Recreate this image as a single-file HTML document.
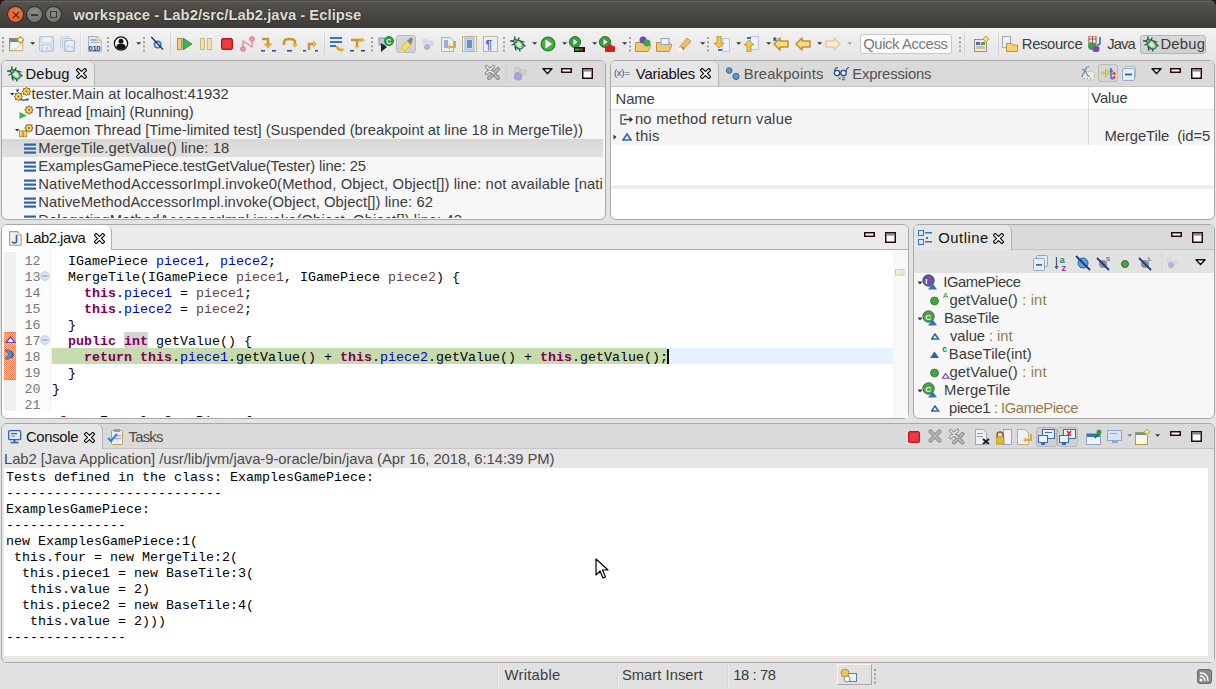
<!DOCTYPE html><html><head><meta charset="utf-8"><style>
html,body{margin:0;padding:0;}
body{width:1216px;height:689px;overflow:hidden;position:relative;background:#e3e3e3;font-family:"Liberation Sans",sans-serif;}
body div, body svg{position:absolute;}
.t{white-space:pre;line-height:18px;}
.m{white-space:pre;line-height:16px;font-family:"Liberation Mono",monospace;font-size:13.333px;}
.kw{color:#7f0055;font-weight:bold;}
.fd{color:#0000c0;}
.pm{color:#6a3e3e;}
</style></head><body><div style="left:0px;top:0px;width:1216px;height:28px;background:linear-gradient(#57554e 0px,#4e4c46 8px,#403f3b 24px,#3a3935 28px);"></div><div style="left:0px;top:0px;width:1216px;height:1px;background:#4a4944;"></div><div style="left:4px;top:1px;width:1208px;height:1px;background:#67655c;"></div><svg style="left:0;top:0" width="6" height="6"><path d="M0 0H6Q1 0 0 6Z" fill="#2c0a22"/></svg><svg style="left:1210px;top:0" width="6" height="6"><path d="M6 0H0Q5 0 6 6Z" fill="#1c1c1a"/></svg><div style="left:7.0px;top:6px;width:17px;height:17px;border-radius:50%;background:#2f2e2a;"></div><div style="left:8.0px;top:7px;width:15px;height:15px;border-radius:50%;background:radial-gradient(circle at 50% 35%,#f7793f,#e9541d);"></div><svg style="left:11.5px;top:10.5px" width="8" height="8" viewBox="0 0 8 8"><path d="M1 1L7 7M7 1L1 7" stroke="#3a2a20" stroke-width="1.2"/></svg><div style="left:26.0px;top:6px;width:17px;height:17px;border-radius:50%;background:#2f2e2a;"></div><div style="left:27.0px;top:7px;width:15px;height:15px;border-radius:50%;background:radial-gradient(circle at 50% 35%,#8c8b86,#6d6c67);"></div><div style="left:31.0px;top:14px;width:7px;height:1.5px;background:#3a3935;"></div><div style="left:45.0px;top:6px;width:17px;height:17px;border-radius:50%;background:#2f2e2a;"></div><div style="left:46.0px;top:7px;width:15px;height:15px;border-radius:50%;background:radial-gradient(circle at 50% 35%,#8c8b86,#6d6c67);"></div><div style="left:50.0px;top:11px;width:7px;height:7px;border:1.2px solid #3a3935;box-sizing:border-box;"></div><div class="t" style="left:73.3px;top:5.87px;font-size:14.8px;color:#dfdbd2;font-family:'Liberation Sans', sans-serif;letter-spacing:0.026px;font-weight:bold;text-shadow:0 0 1.5px #1a1a18;">workspace - Lab2/src/Lab2.java - Eclipse</div><div style="left:0px;top:28px;width:1216px;height:32px;background:linear-gradient(#f2f2f2,#ebebeb 50%,#e5e5e5);"></div><svg style="left:2px;top:36.5px" width="2" height="16" viewBox="0 0 2 16"><rect x="0" y="0.0" width="2" height="2" fill="#a8a290"/><rect x="0" y="4.2" width="2" height="2" fill="#a8a290"/><rect x="0" y="8.4" width="2" height="2" fill="#a8a290"/><rect x="0" y="12.6" width="2" height="2" fill="#a8a290"/></svg><svg style="left:9px;top:36px" width="16" height="16" viewBox="0 0 16 16"><defs><linearGradient id="ng" x1="0" y1="0" x2="1" y2="1"><stop offset="0" stop-color="#a08040"/><stop offset="1" stop-color="#d8c090"/></linearGradient></defs><rect x="0.6" y="2.6" width="13" height="12" fill="#eaf5fc" stroke="url(#ng)" stroke-width="1.2"/><rect x="1.2" y="3" width="11.8" height="3" fill="#4a8ad0"/><path d="M4 14Q11 12 12 6" fill="none" stroke="#f0d890" stroke-width="1.4"/><path d="M11.5 0.6L14.8 3.9L11.5 7.2L8.2 3.9Z" fill="#fff8e0" stroke="#c09838" stroke-width="1.3"/></svg><svg style="left:30px;top:42.2px" width="6" height="4" viewBox="0 0 6 4"><path d="M0.2 0.2H5.2L2.7 2.8Z" fill="#333"/></svg><svg style="left:39px;top:36px" width="16" height="16" viewBox="0 0 16 16"><rect x="0.6" y="0.6" width="14" height="14.5" rx="1.5" fill="#dce6f2" stroke="#b4c4d8" stroke-width="1.2"/><rect x="3" y="1" width="9.5" height="5.5" fill="#eef2f6" stroke="#d8d0b8" stroke-width="0.6"/><rect x="3.5" y="9" width="8.5" height="6" fill="#e8eef6" stroke="#b4c4d8" stroke-width="0.8"/><rect x="7" y="11" width="1.5" height="3" fill="#b4c4d8"/></svg><svg style="left:60px;top:36px" width="16" height="16" viewBox="0 0 16 16"><rect x="0.5" y="0.5" width="9" height="11" rx="1" fill="#e4eaf2" stroke="#c4d0e0"/><rect x="2.5" y="2.5" width="9" height="11" rx="1" fill="#e0e8f2" stroke="#bccade"/><rect x="4.6" y="4.6" width="10" height="10.8" rx="1" fill="#dce6f2" stroke="#b0c0d6" stroke-width="1.1"/><rect x="7" y="5" width="6" height="3.5" fill="#eef2f6"/><rect x="7" y="11" width="6" height="4" fill="#e8eef6" stroke="#b4c4d8" stroke-width="0.6"/></svg><div style="left:80px;top:33px;width:1px;height:22px;background:#dadada;"></div><div style="left:81px;top:33px;width:1px;height:22px;background:#f6f6f6;"></div><svg style="left:88px;top:36px" width="14" height="16" viewBox="0 0 14 16"><path d="M0.6 0.6H9L13.2 4.8V15.4H0.6Z" fill="#eef2f8" stroke="#a8b0c0" stroke-width="1.1"/><path d="M9 0.6V4.8H13.2" fill="#f0e0b0" stroke="#c8b080" stroke-width="0.8"/><rect x="2.5" y="3" width="6" height="2.2" fill="#9ab0d0"/><rect x="2.5" y="6" width="9" height="1" fill="#9ab0d0"/><text x="0.6" y="14.6" font-size="7.6" font-family="Liberation Sans" font-weight="bold" fill="#1a3a70" letter-spacing="-0.4">010</text></svg><svg style="left:107px;top:36.5px" width="2" height="16" viewBox="0 0 2 16"><rect x="0" y="0.0" width="2" height="2" fill="#a8a290"/><rect x="0" y="4.2" width="2" height="2" fill="#a8a290"/><rect x="0" y="8.4" width="2" height="2" fill="#a8a290"/><rect x="0" y="12.6" width="2" height="2" fill="#a8a290"/></svg><svg style="left:113px;top:36px" width="16" height="16" viewBox="0 0 16 16"><circle cx="8" cy="7.5" r="6.6" fill="#fff" stroke="#111" stroke-width="1.3"/><circle cx="8" cy="5.3" r="2.5" fill="#111"/><path d="M3.2 11.5Q3.5 8 6 8H10Q12.5 8 12.8 11.5Q8 15.5 3.2 11.5Z" fill="#111"/></svg><svg style="left:136px;top:42.2px" width="6" height="4" viewBox="0 0 6 4"><path d="M0.2 0.2H5.2L2.7 2.8Z" fill="#333"/></svg><svg style="left:143px;top:36.5px" width="2" height="16" viewBox="0 0 2 16"><rect x="0" y="0.0" width="2" height="2" fill="#a8a290"/><rect x="0" y="4.2" width="2" height="2" fill="#a8a290"/><rect x="0" y="8.4" width="2" height="2" fill="#a8a290"/><rect x="0" y="12.6" width="2" height="2" fill="#a8a290"/></svg><svg style="left:151px;top:36px" width="14" height="16" viewBox="0 0 14 16"><circle cx="6.7" cy="8.6" r="3.2" fill="none" stroke="#2a80b0" stroke-width="1.6"/><path d="M0.3 1L12 13.4" stroke="#203080" stroke-width="1.4"/></svg><div style="left:170px;top:33px;width:1px;height:22px;background:#d6d6d6;"></div><svg style="left:177px;top:36px" width="16" height="16" viewBox="0 0 16 16"><rect x="0.5" y="2.5" width="4" height="11" fill="#f0d070" stroke="#b89030"/><path d="M6 2L15 8L6 14Z" fill="#40b050" stroke="#2a8a3a" stroke-width="0.8"/></svg><svg style="left:200px;top:36px" width="12" height="16" viewBox="0 0 12 16"><rect x="0.5" y="2.5" width="4" height="11" fill="#f0e0b0" stroke="#d0b880"/><rect x="7.5" y="2.5" width="4" height="11" fill="#f0e0b0" stroke="#d0b880"/></svg><svg style="left:221px;top:36px" width="12" height="16" viewBox="0 0 12 16"><rect x="0.5" y="2.5" width="11" height="11" rx="1.5" fill="#e02830" stroke="#b01820"/><rect x="2" y="4" width="8" height="8" fill="#ee3a40"/></svg><svg style="left:240px;top:36px" width="15" height="16" viewBox="0 0 15 16"><circle cx="3" cy="13" r="2.3" fill="#f0a0a8" stroke="#d07080"/><circle cx="12" cy="3" r="2.3" fill="#f0a0a8" stroke="#d07080"/><path d="M3 11V5L12 11V5" fill="none" stroke="#e08090" stroke-width="1.2"/></svg><svg style="left:261px;top:36px" width="16" height="16" viewBox="0 0 16 16"><path d="M1 3H7V9" fill="none" stroke="#c89830" stroke-width="2.5"/><path d="M3.5 8H10.5L7 12Z" fill="#e8b840" stroke="#b88a20" stroke-width="0.6"/><rect x="0" y="14" width="4" height="1.5" fill="#2a4a90"/><rect x="11" y="14" width="4" height="1.5" fill="#2a4a90"/></svg><svg style="left:282px;top:36px" width="16" height="16" viewBox="0 0 16 16"><path d="M2 9V6Q2 3 7.5 3Q13 3 13 6V8" fill="none" stroke="#c89830" stroke-width="2.5"/><path d="M9.5 8H16L13 12Z" fill="#e8b840"/><rect x="5" y="14" width="5" height="1.5" fill="#2a4a90"/></svg><svg style="left:303px;top:36px" width="16" height="16" viewBox="0 0 16 16"><path d="M6 14V8H11" fill="none" stroke="#c89830" stroke-width="2.5"/><path d="M10 4L14 8L10 12Z" fill="#e8b840"/><rect x="0" y="14" width="3" height="1.5" fill="#2a4a90"/><rect x="12" y="14" width="3" height="1.5" fill="#2a4a90"/></svg><div style="left:324px;top:33px;width:1px;height:22px;background:#d6d6d6;"></div><svg style="left:330px;top:36px" width="16" height="16" viewBox="0 0 16 16"><rect x="0" y="1" width="12" height="2" fill="#3a70c0"/><rect x="0" y="5" width="12" height="2" fill="#3a70c0"/><rect x="0" y="9" width="6" height="2" fill="#3a70c0"/><path d="M7 10Q7 14 12 14" fill="none" stroke="#d8a830" stroke-width="2.5"/><path d="M11 11L15 14L11 16Z" fill="#e8b840"/></svg><svg style="left:350px;top:36px" width="16" height="16" viewBox="0 0 16 16"><path d="M1 4H12" stroke="#c89830" stroke-width="2.5"/><path d="M7 4V11" stroke="#c89830" stroke-width="2.5"/><path d="M11 1L15 4L11 7Z" fill="#e8b840"/><path d="M4 10H10L7 13Z" fill="#e8b840"/><rect x="0" y="14" width="4" height="1.5" fill="#2a4a90"/><rect x="11" y="14" width="4" height="1.5" fill="#2a4a90"/></svg><svg style="left:371px;top:36.5px" width="2" height="16" viewBox="0 0 2 16"><rect x="0" y="0.0" width="2" height="2" fill="#a8a290"/><rect x="0" y="4.2" width="2" height="2" fill="#a8a290"/><rect x="0" y="8.4" width="2" height="2" fill="#a8a290"/><rect x="0" y="12.6" width="2" height="2" fill="#a8a290"/></svg><svg style="left:378px;top:36px" width="16" height="16" viewBox="0 0 16 16"><rect x="1" y="2" width="8" height="7" fill="#c0c8e0" stroke="#8890b0"/><path d="M3 7V16L9 11Z" fill="#222"/><circle cx="11" cy="5" r="4.5" fill="#30a040" stroke="#208030"/><text x="8.3" y="7.5" font-size="6.5" font-family="Liberation Sans" font-weight="bold" fill="#fff">C</text></svg><div style="left:396px;top:34.5px;width:20px;height:18px;background:linear-gradient(#d8d8d8,#cfcfcf);border:1px solid #b8b8b8;border-radius:3px;box-sizing:border-box;"></div><svg style="left:398px;top:36px" width="16" height="16" viewBox="0 0 16 16"><path d="M3 12L9 5L13 9L7 15Z" fill="#f0e060" stroke="#c8b030" stroke-width="0.6"/><path d="M9 5L13 1L15 3L13 9Z" fill="#888"/><path d="M1 15H6" stroke="#f0e060" stroke-width="2"/></svg><svg style="left:421px;top:36px" width="14" height="16" viewBox="0 0 14 16"><circle cx="4" cy="5" r="3" fill="#d8d8e0"/><circle cx="10" cy="7" r="3" fill="#d8d8e0"/><circle cx="6" cy="11" r="3" fill="#b8b0d8"/></svg><svg style="left:441px;top:36px" width="16" height="16" viewBox="0 0 16 16"><path d="M0.5 1.5H9L12.5 5V15.5H0.5Z" fill="#e8eef8" stroke="#c0b080"/><rect x="3" y="4" width="4" height="8" fill="#9ab0d8"/><path d="M14 5V11H8" fill="none" stroke="#d8a830" stroke-width="2"/><path d="M9 8L6 11L9 14Z" fill="#e8b840"/></svg><svg style="left:462px;top:36px" width="15" height="16" viewBox="0 0 15 16"><rect x="0.5" y="0.5" width="14" height="15" fill="#e8eef8" stroke="#c8b888"/><rect x="3" y="2" width="9" height="12" fill="#c8d8f0" stroke="#90a8d0" stroke-width="0.8"/><rect x="5" y="4" width="5" height="8" fill="#7090c0"/></svg><svg style="left:483px;top:36px" width="15" height="16" viewBox="0 0 15 16"><rect x="0.5" y="0.5" width="14" height="15" fill="#e8eef8" stroke="#c8b888"/><text x="2.5" y="13" font-size="12" font-family="Liberation Sans" font-weight="bold" fill="#4878b8">¶</text></svg><svg style="left:503px;top:36.5px" width="2" height="16" viewBox="0 0 2 16"><rect x="0" y="0.0" width="2" height="2" fill="#a8a290"/><rect x="0" y="4.2" width="2" height="2" fill="#a8a290"/><rect x="0" y="8.4" width="2" height="2" fill="#a8a290"/><rect x="0" y="12.6" width="2" height="2" fill="#a8a290"/></svg><svg style="left:510px;top:36px" width="16" height="16" viewBox="0 0 16 16"><g stroke="#1f4a38" stroke-width="1.3" stroke-linecap="round" fill="none"><path d="M4.9 0.8V3.6M9 2L8 4.4M0.6 5H4M10.5 5L14 6M2 9L4.5 8M13.5 8.5L15 10M5 11L6 14M9 12.5L10 15"/></g><ellipse cx="8.8" cy="8.6" rx="5" ry="3.7" transform="rotate(45 8.8 8.6)" fill="#a8dc90" stroke="#1f5a60" stroke-width="1.2"/><ellipse cx="8.8" cy="8.6" rx="2.6" ry="1.6" transform="rotate(45 8.8 8.6)" fill="#d8f4c8"/><circle cx="5.2" cy="5.1" r="1.9" fill="#6ab860" stroke="#1f5a60" stroke-width="0.9"/></svg><svg style="left:532px;top:42.2px" width="6" height="4" viewBox="0 0 6 4"><path d="M0.2 0.2H5.2L2.7 2.8Z" fill="#333"/></svg><svg style="left:540px;top:36px" width="16" height="16" viewBox="0 0 16 16"><circle cx="8" cy="8" r="7.5" fill="#2a8a30"/><circle cx="8" cy="8" r="6" fill="#48b040"/><path d="M5.5 3.5L12 8L5.5 12.5Z" fill="#fff"/></svg><svg style="left:562px;top:42.2px" width="6" height="4" viewBox="0 0 6 4"><path d="M0.2 0.2H5.2L2.7 2.8Z" fill="#333"/></svg><svg style="left:569px;top:36px" width="16" height="16" viewBox="0 0 16 16"><circle cx="6" cy="6" r="5.5" fill="#38a040" stroke="#207028"/><path d="M4.5 3L8.5 6L4.5 9Z" fill="#fff"/><rect x="5" y="11" width="11" height="5" fill="#111"/><rect x="6" y="12.5" width="4" height="2" fill="#20c030"/><rect x="10" y="12.5" width="4" height="2" fill="#e02020"/></svg><svg style="left:592px;top:42.2px" width="6" height="4" viewBox="0 0 6 4"><path d="M0.2 0.2H5.2L2.7 2.8Z" fill="#333"/></svg><svg style="left:599px;top:36px" width="16" height="16" viewBox="0 0 16 16"><circle cx="6" cy="6" r="5.5" fill="#38a040" stroke="#207028"/><path d="M4.5 3L8.5 6L4.5 9Z" fill="#fff"/><rect x="6" y="10" width="10" height="6" rx="1" fill="#d02020"/><rect x="9" y="8.5" width="4" height="2" fill="#d02020"/></svg><svg style="left:622px;top:42.2px" width="6" height="4" viewBox="0 0 6 4"><path d="M0.2 0.2H5.2L2.7 2.8Z" fill="#333"/></svg><svg style="left:629px;top:36.5px" width="2" height="16" viewBox="0 0 2 16"><rect x="0" y="0.0" width="2" height="2" fill="#a8a290"/><rect x="0" y="4.2" width="2" height="2" fill="#a8a290"/><rect x="0" y="8.4" width="2" height="2" fill="#a8a290"/><rect x="0" y="12.6" width="2" height="2" fill="#a8a290"/></svg><svg style="left:635px;top:36px" width="16" height="16" viewBox="0 0 16 16"><path d="M0.5 6.5H13L16 9L13 15.5H0.5Z" fill="#f0c870" stroke="#c09040"/><circle cx="8" cy="4" r="3.5" fill="#6050b0"/><circle cx="12" cy="7" r="3.5" fill="#40a050"/></svg><svg style="left:656px;top:36px" width="16" height="16" viewBox="0 0 16 16"><path d="M0.5 6.5H13L16 9L13 15.5H0.5Z" fill="#f0c870" stroke="#c09040"/><rect x="5" y="2.5" width="8" height="6" fill="#eef2f8" stroke="#90a0c0"/></svg><svg style="left:677px;top:36px" width="16" height="16" viewBox="0 0 16 16"><path d="M2 12L10 2L14 5L6 14Z" fill="#e8c070" stroke="#b88a30" stroke-width="0.8"/><path d="M4 10L8 12L6 14Z" fill="#888"/><circle cx="3" cy="14" r="2.5" fill="#fff8d0"/></svg><svg style="left:700px;top:42.2px" width="6" height="4" viewBox="0 0 6 4"><path d="M0.2 0.2H5.2L2.7 2.8Z" fill="#333"/></svg><svg style="left:707px;top:36.5px" width="2" height="16" viewBox="0 0 2 16"><rect x="0" y="0.0" width="2" height="2" fill="#a8a290"/><rect x="0" y="4.2" width="2" height="2" fill="#a8a290"/><rect x="0" y="8.4" width="2" height="2" fill="#a8a290"/><rect x="0" y="12.6" width="2" height="2" fill="#a8a290"/></svg><svg style="left:714px;top:36px" width="16" height="16" viewBox="0 0 16 16"><rect x="8.5" y="2.5" width="7" height="13" fill="#eef2f8" stroke="#b8c8e0"/><path d="M3 0V7H0L5 12L10 7H7V0Z" fill="#f0c850" stroke="#b88a20" stroke-width="0.8"/><rect x="4" y="13" width="4" height="2" fill="#3a70c0"/></svg><svg style="left:736px;top:42.2px" width="6" height="4" viewBox="0 0 6 4"><path d="M0.2 0.2H5.2L2.7 2.8Z" fill="#333"/></svg><svg style="left:744px;top:36px" width="16" height="16" viewBox="0 0 16 16"><rect x="6.5" y="0.5" width="8" height="13" fill="#eef2f8" stroke="#b8c8e0"/><path d="M3 16V9H0L5 4L10 9H7V16Z" fill="#f0c850" stroke="#b88a20" stroke-width="0.8"/><rect x="3" y="1" width="4" height="2" fill="#3a70c0"/></svg><svg style="left:766px;top:42.2px" width="6" height="4" viewBox="0 0 6 4"><path d="M0.2 0.2H5.2L2.7 2.8Z" fill="#333"/></svg><svg style="left:773px;top:36px" width="16" height="16" viewBox="0 0 16 16"><path d="M1 8L7 2V5H15V11H7V14Z" fill="#f8dc80" stroke="#c09030" stroke-width="1.5" stroke-linejoin="round"/><text x="-0.5" y="8.5" font-size="11" font-family="Liberation Sans" font-weight="bold" fill="#2a4a90">*</text></svg><svg style="left:795px;top:36px" width="16" height="16" viewBox="0 0 16 16"><path d="M1 8L7 2V5H15V11H7V14Z" fill="#f8dc80" stroke="#c09030" stroke-width="1.5" stroke-linejoin="round"/></svg><svg style="left:817px;top:42.2px" width="6" height="4" viewBox="0 0 6 4"><path d="M0.2 0.2H5.2L2.7 2.8Z" fill="#333"/></svg><svg style="left:825px;top:36px" width="16" height="16" viewBox="0 0 16 16"><path d="M15 8L9 2V5H1V11H9V14Z" fill="#f6ecd0" stroke="#e0cca0" stroke-width="1.5" stroke-linejoin="round"/></svg><svg style="left:847px;top:42.2px" width="6" height="4" viewBox="0 0 6 4"><path d="M0.2 0.2H5.2L2.7 2.8Z" fill="#aaa"/></svg><div style="left:860px;top:34px;width:92px;height:20px;background:#fbfbfb;border:1px solid #c8c8c8;border-radius:3px;box-sizing:border-box;"></div><div class="t" style="left:863.1999999999999px;top:34.87px;font-size:14.8px;color:#7a7a7a;font-family:'Liberation Sans', sans-serif;letter-spacing:-0.373px;">Quick Access</div><svg style="left:959px;top:36.5px" width="2" height="16" viewBox="0 0 2 16"><rect x="0" y="0.0" width="2" height="2" fill="#a8a290"/><rect x="0" y="4.2" width="2" height="2" fill="#a8a290"/><rect x="0" y="8.4" width="2" height="2" fill="#a8a290"/><rect x="0" y="12.6" width="2" height="2" fill="#a8a290"/></svg><div style="left:964px;top:31px;width:1px;height:26px;background:#d6d6d6;"></div><svg style="left:974px;top:36px" width="16" height="16" viewBox="0 0 16 16"><rect x="0.5" y="3.5" width="12" height="12" fill="#f0e8d8" stroke="#909090"/><rect x="2" y="6" width="4" height="3" fill="#3a70c0"/><rect x="7" y="6" width="4" height="3" fill="#50a050"/><rect x="2" y="10" width="9" height="3" fill="#d0c0a0"/><path d="M12 0L15 3L12 6L9 3Z" fill="#f8e080" stroke="#c8a040"/></svg><div style="left:998px;top:33px;width:1px;height:22px;background:#d6d6d6;"></div><svg style="left:1002px;top:36px" width="16" height="16" viewBox="0 0 16 16"><rect x="0.5" y="0.5" width="8" height="11" fill="#eef2f8" stroke="#a0a8c0"/><path d="M4.5 7.5H10L11 9H15.5V15.5H4.5Z" fill="#f8d070" stroke="#c09040"/></svg><div class="t" style="left:1021.8px;top:35.37px;font-size:14.8px;color:#3c3c3c;font-family:'Liberation Sans', sans-serif;letter-spacing:-0.357px;">Resource</div><svg style="left:1087px;top:36px" width="16" height="16" viewBox="0 0 16 16"><rect x="2" y="0" width="7" height="8" fill="#fff" stroke="#a04030"/><path d="M2 3H9M5.5 0V8" stroke="#a04030"/><circle cx="5" cy="10" r="4" fill="#40a040"/><circle cx="9" cy="13" r="3.5" fill="#7050b0"/><path d="M13 1V7Q13 9 10 9" fill="none" stroke="#2a60c0" stroke-width="1.5"/></svg><div class="t" style="left:1107.3px;top:35.37px;font-size:14.8px;color:#3c3c3c;font-family:'Liberation Sans', sans-serif;letter-spacing:-0.900px;">Java</div><div style="left:1140px;top:35px;width:66px;height:19px;background:linear-gradient(#d9d9d9,#d0d0d0);border:1px solid #b5b5b5;border-radius:3px;box-sizing:border-box;"></div><svg style="left:1143px;top:36px" width="16" height="16" viewBox="0 0 16 16"><g stroke="#1f4a38" stroke-width="1.3" stroke-linecap="round" fill="none"><path d="M4.9 0.8V3.6M9 2L8 4.4M0.6 5H4M10.5 5L14 6M2 9L4.5 8M13.5 8.5L15 10M5 11L6 14M9 12.5L10 15"/></g><ellipse cx="8.8" cy="8.6" rx="5" ry="3.7" transform="rotate(45 8.8 8.6)" fill="#a8dc90" stroke="#1f5a60" stroke-width="1.2"/><ellipse cx="8.8" cy="8.6" rx="2.6" ry="1.6" transform="rotate(45 8.8 8.6)" fill="#d8f4c8"/><circle cx="5.2" cy="5.1" r="1.9" fill="#6ab860" stroke="#1f5a60" stroke-width="0.9"/></svg><div class="t" style="left:1160.3999999999999px;top:35.37px;font-size:14.8px;color:#3c3c3c;font-family:'Liberation Sans', sans-serif;letter-spacing:0.225px;">Debug</div><div style="left:1px;top:60px;width:605px;height:160px;background:#f7f7f7;border:1px solid #a9a9a9;border-radius:6px;box-sizing:border-box;overflow:hidden;"></div><div style="left:2px;top:61px;width:603px;height:26px;background:#dadada;border-radius:5px 5px 0 0;"></div><div style="left:2px;top:86px;width:603px;height:1px;background:#c4c4c4;"></div><div style="left:2px;top:61px;width:93px;height:25px;background:#e6e6e6;border-right:1px solid #b0b0b0;border-radius:5px 6px 0 0;box-sizing:border-box;"></div><svg style="left:6.5px;top:66px" width="16" height="16" viewBox="0 0 16 16"><g stroke="#1f4a38" stroke-width="1.3" stroke-linecap="round" fill="none"><path d="M4.9 0.8V3.6M9 2L8 4.4M0.6 5H4M10.5 5L14 6M2 9L4.5 8M13.5 8.5L15 10M5 11L6 14M9 12.5L10 15"/></g><ellipse cx="8.8" cy="8.6" rx="5" ry="3.7" transform="rotate(45 8.8 8.6)" fill="#a8dc90" stroke="#1f5a60" stroke-width="1.2"/><ellipse cx="8.8" cy="8.6" rx="2.6" ry="1.6" transform="rotate(45 8.8 8.6)" fill="#d8f4c8"/><circle cx="5.2" cy="5.1" r="1.9" fill="#6ab860" stroke="#1f5a60" stroke-width="0.9"/></svg><div class="t" style="left:25.5px;top:65.17px;font-size:14.8px;color:#111;font-family:'Liberation Sans', sans-serif;letter-spacing:0.125px;">Debug</div><svg style="left:76px;top:68px" width="11" height="11" viewBox="0 0 11 11"><path d="M2.2 2.2L8.8 8.8M8.8 2.2L2.2 8.8" stroke="#000" stroke-width="3.9" stroke-linecap="square"/><path d="M2.2 2.2L8.8 8.8M8.8 2.2L2.2 8.8" stroke="#fff" stroke-width="1.7" stroke-linecap="square"/></svg><svg style="left:484px;top:64px" width="17" height="17" viewBox="0 0 17 17"><g stroke-linecap="round"><path d="M5 5L14 14M14 5L5 14" stroke="#8a8a8a" stroke-width="4"/><path d="M5 5L14 14M14 5L5 14" stroke="#b8b8b8" stroke-width="2"/><path d="M2.5 2.5L9.5 9.5M9.5 2.5L2.5 9.5" stroke="#8a8a8a" stroke-width="3.4"/><path d="M2.5 2.5L9.5 9.5M9.5 2.5L2.5 9.5" stroke="#e8e8e8" stroke-width="1.6"/></g></svg><div style="left:505.5px;top:63px;width:1px;height:20px;background:#d2d2d2;"></div><svg style="left:512px;top:66px" width="15" height="15" viewBox="0 0 15 15"><circle cx="5" cy="4" r="3.2" fill="#d0d0d0" stroke="#bcbcbc" stroke-width="0.7"/><circle cx="11" cy="6.5" r="3.2" fill="#d0d0d0" stroke="#bcbcbc" stroke-width="0.7"/><circle cx="6" cy="10.5" r="3.8" fill="#aaa2d8" stroke="#9890c8" stroke-width="0.7"/></svg><svg style="left:541.5px;top:67.5px" width="11" height="7" viewBox="0 0 11 7"><path d="M1 0.8H10L5.5 5.6Z" fill="#fff" stroke="#111" stroke-width="1.5" stroke-linejoin="round"/></svg><svg style="left:560.5px;top:68px" width="11" height="5" viewBox="0 0 11 5"><rect x="0.75" y="0.75" width="9.5" height="3.5" fill="#fff" stroke="#2a0808" stroke-width="1.5"/></svg><svg style="left:581.5px;top:68px" width="11" height="11" viewBox="0 0 11 11"><rect x="0.75" y="0.75" width="9.5" height="9.5" fill="#fff" stroke="#2a0808" stroke-width="1.5"/><rect x="1.5" y="1.5" width="8" height="2" fill="#808080"/></svg><div style="left:2px;top:139px;width:601px;height:18px;background:linear-gradient(#d9d7d3,#dedcd9 40%,#e2e1df);"></div><div style="left:2px;top:87px;width:601px;height:131px;overflow:hidden;"><svg style="left:7.5px;top:6px" width="5" height="3"><path d="M0 0H4.5L2.25 2.5Z" fill="#333"/></svg><div class="t" style="left:29.50px;top:-1.84px;font-size:14.8px;color:#3c3c3c;letter-spacing:0.021px;">tester.Main at localhost:41932</div><div class="t" style="left:33.40px;top:16.16px;font-size:14.8px;color:#3c3c3c;letter-spacing:-0.100px;">Thread [main] (Running)</div><svg style="left:12.5px;top:42px" width="5" height="3"><path d="M0 0H4.5L2.25 2.5Z" fill="#333"/></svg><div class="t" style="left:32.40px;top:34.16px;font-size:14.8px;color:#3c3c3c;letter-spacing:0.006px;">Daemon Thread [Time-limited test] (Suspended (breakpoint at line 18 in MergeTile))</div><svg style="left:22px;top:53px" width="13" height="16"><rect x="0" y="3.5" width="12" height="2.2" fill="#2a66b0"/><rect x="0" y="7.5" width="12" height="2.2" fill="#2a66b0"/><rect x="0" y="11.5" width="12" height="2.2" fill="#2a66b0"/></svg><div class="t" style="left:36.30px;top:52.16px;font-size:14.8px;color:#3c3c3c;letter-spacing:0.093px;">MergeTile.getValue() line: 18</div><svg style="left:22px;top:71px" width="13" height="16"><rect x="0" y="3.5" width="12" height="2.2" fill="#2a66b0"/><rect x="0" y="7.5" width="12" height="2.2" fill="#2a66b0"/><rect x="0" y="11.5" width="12" height="2.2" fill="#2a66b0"/></svg><div class="t" style="left:36.30px;top:70.16px;font-size:14.8px;color:#3c3c3c;letter-spacing:-0.111px;">ExamplesGamePiece.testGetValue(Tester) line: 25</div><svg style="left:22px;top:89px" width="13" height="16"><rect x="0" y="3.5" width="12" height="2.2" fill="#2a66b0"/><rect x="0" y="7.5" width="12" height="2.2" fill="#2a66b0"/><rect x="0" y="11.5" width="12" height="2.2" fill="#2a66b0"/></svg><div class="t" style="left:36.30px;top:88.16px;font-size:14.8px;color:#3c3c3c;letter-spacing:0.113px;">NativeMethodAccessorImpl.invoke0(Method, Object, Object[]) line: not available [native method]</div><svg style="left:22px;top:107px" width="13" height="16"><rect x="0" y="3.5" width="12" height="2.2" fill="#2a66b0"/><rect x="0" y="7.5" width="12" height="2.2" fill="#2a66b0"/><rect x="0" y="11.5" width="12" height="2.2" fill="#2a66b0"/></svg><div class="t" style="left:36.30px;top:106.16px;font-size:14.8px;color:#3c3c3c;letter-spacing:0.070px;">NativeMethodAccessorImpl.invoke(Object, Object[]) line: 62</div><svg style="left:22px;top:125px" width="13" height="16"><rect x="0" y="3.5" width="12" height="2.2" fill="#2a66b0"/><rect x="0" y="7.5" width="12" height="2.2" fill="#2a66b0"/><rect x="0" y="11.5" width="12" height="2.2" fill="#2a66b0"/></svg><div class="t" style="left:36.30px;top:124.16px;font-size:14.8px;color:#3c3c3c;letter-spacing:0.070px;">DelegatingMethodAccessorImpl.invoke(Object, Object[]) line: 43</div></div><svg style="left:12.5px;top:87px" width="20" height="18" viewBox="0 0 20 18"><path d="M3.5 4.5L6 2.5" stroke="#1a5ab0" stroke-width="1.4"/><path d="M2.5 2.5H5V5Z" fill="#1a5ab0"/><path d="M7.5 12.5Q11 14 14.5 12" fill="none" stroke="#1a5ab0" stroke-width="1.4"/><path d="M15.5 10.5V13.5H12.5Z" fill="#1a5ab0"/><polygon points="9.80,9.50 8.36,10.69 8.54,12.54 6.69,12.36 5.50,13.80 4.31,12.36 2.46,12.54 2.64,10.69 1.20,9.50 2.64,8.31 2.46,6.46 4.31,6.64 5.50,5.20 6.69,6.64 8.54,6.46 8.36,8.31" fill="#f2c23a" stroke="#7a4a18" stroke-width="0.8" stroke-linejoin="round"/><circle cx="5.5" cy="9.5" r="2.2" fill="#f8dc70"/><circle cx="5.5" cy="9.5" r="1" fill="#806040"/><polygon points="17.80,4.50 16.36,5.69 16.54,7.54 14.69,7.36 13.50,8.80 12.31,7.36 10.46,7.54 10.64,5.69 9.20,4.50 10.64,3.31 10.46,1.46 12.31,1.64 13.50,0.20 14.69,1.64 16.54,1.46 16.36,3.31" fill="#f2c23a" stroke="#7a4a18" stroke-width="0.8" stroke-linejoin="round"/><circle cx="13.5" cy="4.5" r="2.2" fill="#f8dc70"/><circle cx="13.5" cy="4.5" r="1" fill="#806040"/></svg><svg style="left:18.5px;top:104px" width="20" height="18" viewBox="0 0 20 18"><path d="M0.5 8L8 11.5L0.5 15Z" fill="#48b058"/><polygon points="14.30,6.00 12.86,7.19 13.04,9.04 11.19,8.86 10.00,10.30 8.81,8.86 6.96,9.04 7.14,7.19 5.70,6.00 7.14,4.81 6.96,2.96 8.81,3.14 10.00,1.70 11.19,3.14 13.04,2.96 12.86,4.81" fill="#f2c23a" stroke="#7a4a18" stroke-width="0.8" stroke-linejoin="round"/><circle cx="10" cy="6" r="2.2" fill="#f8dc70"/><circle cx="10" cy="6" r="1" fill="#806040"/></svg><svg style="left:18.5px;top:124px" width="20" height="18" viewBox="0 0 20 18"><rect x="0.6" y="6.8" width="3.2" height="6" fill="#f0d060" stroke="#a88020" stroke-width="0.7"/><rect x="4.6" y="6.8" width="3.2" height="6" fill="#f0d060" stroke="#a88020" stroke-width="0.7"/><polygon points="14.30,4.00 12.86,5.19 13.04,7.04 11.19,6.86 10.00,8.30 8.81,6.86 6.96,7.04 7.14,5.19 5.70,4.00 7.14,2.81 6.96,0.96 8.81,1.14 10.00,-0.30 11.19,1.14 13.04,0.96 12.86,2.81" fill="#f2c23a" stroke="#7a4a18" stroke-width="0.8" stroke-linejoin="round"/><circle cx="10" cy="4" r="2.2" fill="#f8dc70"/><circle cx="10" cy="4" r="1" fill="#806040"/></svg><div style="left:610px;top:60px;width:605px;height:160px;background:#ffffff;border:1px solid #a9a9a9;border-radius:6px;box-sizing:border-box;overflow:hidden;"></div><div style="left:611px;top:61px;width:603px;height:26px;background:#dadada;border-radius:5px 5px 0 0;"></div><div style="left:611px;top:86px;width:603px;height:1px;background:#c4c4c4;"></div><div style="left:611px;top:61px;width:108px;height:25px;background:#e6e6e6;border-right:1px solid #b0b0b0;border-radius:5px 6px 0 0;box-sizing:border-box;"></div><svg style="left:614px;top:66px" width="20" height="12" viewBox="0 0 20 12"><text x="0" y="9.5" font-size="9.5" font-family="Liberation Sans" fill="#34508a" letter-spacing="-0.3">(x)=</text></svg><div class="t" style="left:635.8px;top:65.37px;font-size:14.8px;color:#111;font-family:'Liberation Sans', sans-serif;letter-spacing:-0.150px;">Variables</div><svg style="left:700px;top:68px" width="11" height="11" viewBox="0 0 11 11"><path d="M2.2 2.2L8.8 8.8M8.8 2.2L2.2 8.8" stroke="#000" stroke-width="3.9" stroke-linecap="square"/><path d="M2.2 2.2L8.8 8.8M8.8 2.2L2.2 8.8" stroke="#fff" stroke-width="1.7" stroke-linecap="square"/></svg><svg style="left:725px;top:65px" width="16" height="16" viewBox="0 0 16 16"><circle cx="4.2" cy="5.5" r="2.8" fill="#5a9ad0" stroke="#2a5a8a" stroke-width="0.9"/><circle cx="11" cy="11.4" r="3.1" fill="#5a9ad0" stroke="#2a5a8a" stroke-width="0.9"/></svg><div class="t" style="left:743.6999999999999px;top:65.37px;font-size:14.8px;color:#505050;font-family:'Liberation Sans', sans-serif;letter-spacing:0.160px;">Breakpoints</div><svg style="left:833px;top:65px" width="17" height="16" viewBox="0 0 17 16"><circle cx="4" cy="8" r="2.7" fill="#eef4fa" stroke="#2a4a80" stroke-width="1.3"/><circle cx="10.5" cy="8" r="2.7" fill="#eef4fa" stroke="#2a4a80" stroke-width="1.3"/><path d="M1.5 6.5Q2 2.5 5 2.5M13 6.5Q14 2 16 2.5" fill="none" stroke="#2a4a80" stroke-width="1.1"/><path d="M5.5 12.5L7.5 14.5M7.5 12.5L5.5 14.5M9 13h3M9 14.8h3" stroke="#2a4a80" stroke-width="0.9"/></svg><div class="t" style="left:852.1999999999999px;top:65.37px;font-size:14.8px;color:#505050;font-family:'Liberation Sans', sans-serif;letter-spacing:-0.130px;">Expressions</div><svg style="left:1079px;top:65px" width="17" height="16" viewBox="0 0 17 16"><rect x="3.5" y="6.5" width="12" height="8.5" rx="2" fill="#eeeae0" stroke="#d8c898"/><path d="M2.5 12Q5 9 6.5 4Q7.5 1.5 10 1.5M3 4.5Q6 4 8 9.5Q9 12 11 11" fill="none" stroke="#6080b8" stroke-width="1.1"/><path d="M5 13.5h1M8 13.5h1M11 13.5h1" stroke="#7090c0" stroke-width="1"/></svg><div style="left:1097.5px;top:63.5px;width:20px;height:18px;background:#d6d6d6;border:1px solid #bdbdbd;border-radius:3px;box-sizing:border-box;"></div><svg style="left:1099.5px;top:65px" width="17" height="16" viewBox="0 0 17 16"><path d="M1 8H6.5" stroke="#e0c060" stroke-width="2.6"/><path d="M5.5 4L9.5 8L5.5 12Z" fill="#e8c860" stroke="#c8a040" stroke-width="0.6"/><path d="M11 3V13Q11 14 13 14" fill="none" stroke="#3a70c0" stroke-width="1.5"/><path d="M9.5 6H13" stroke="#3a70c0" stroke-width="1.3"/><circle cx="14" cy="8.5" r="1.6" fill="#e04050"/><circle cx="14" cy="12.5" r="1.6" fill="#e04050"/></svg><svg style="left:1122px;top:66px" width="15" height="15" viewBox="0 0 15 15"><rect x="2.5" y="0.5" width="11" height="11" rx="1.5" fill="#dde6f2" stroke="#a8b8d0"/><rect x="0.5" y="2.5" width="12" height="12" rx="1.5" fill="#e8eef8" stroke="#98acc8"/><rect x="3" y="7.6" width="7" height="1.8" fill="#2a66b0"/></svg><svg style="left:1150.5px;top:67.5px" width="11" height="7" viewBox="0 0 11 7"><path d="M1 0.8H10L5.5 5.6Z" fill="#fff" stroke="#111" stroke-width="1.5" stroke-linejoin="round"/></svg><svg style="left:1170px;top:68px" width="11" height="5" viewBox="0 0 11 5"><rect x="0.75" y="0.75" width="9.5" height="3.5" fill="#fff" stroke="#2a0808" stroke-width="1.5"/></svg><svg style="left:1191px;top:68px" width="11" height="11" viewBox="0 0 11 11"><rect x="0.75" y="0.75" width="9.5" height="9.5" fill="#fff" stroke="#2a0808" stroke-width="1.5"/><rect x="1.5" y="1.5" width="8" height="2" fill="#808080"/></svg><div style="left:611px;top:87px;width:603px;height:22px;background:#fdfdfd;"></div><div style="left:611px;top:109px;width:603px;height:1px;background:#e6e6e6;"></div><div style="left:1088px;top:87px;width:1px;height:58px;background:#dedede;"></div><div class="t" style="left:615.5999999999999px;top:89.87px;font-size:14.8px;color:#3c3c3c;font-family:'Liberation Sans', sans-serif;letter-spacing:-0.133px;">Name</div><div class="t" style="left:1091.2px;top:89.37px;font-size:14.8px;color:#3c3c3c;font-family:'Liberation Sans', sans-serif;letter-spacing:-0.075px;">Value</div><div style="left:611px;top:110px;width:603px;height:35px;background:#f5f5f5;"></div><div style="left:1088px;top:110px;width:1px;height:35px;background:#d8d8d8;"></div><svg style="left:620px;top:114px" width="14" height="11" viewBox="0 0 14 11"><path d="M6.5 1H1V10H6.5" fill="none" stroke="#606060" stroke-width="1.5"/><path d="M4 5.5H11" stroke="#333" stroke-width="1.4"/><path d="M9.5 2.5L13 5.5L9.5 8.5Z" fill="#333"/></svg><div class="t" style="left:634.9px;top:109.67px;font-size:14.8px;color:#3c3c3c;font-family:'Liberation Sans', sans-serif;letter-spacing:0.252px;">no method return value</div><svg style="left:613px;top:134px" width="4" height="6" viewBox="0 0 4 6"><path d="M0.5 0.5V5.5L3.5 3Z" fill="#333"/></svg><svg style="left:622px;top:133px" width="10" height="8" viewBox="0 0 10 8"><path d="M5 1L9 7H1Z" fill="none" stroke="#2a66b0" stroke-width="1.6"/></svg><div class="t" style="left:635.5999999999999px;top:127.27px;font-size:14.8px;color:#3c3c3c;font-family:'Liberation Sans', sans-serif;letter-spacing:0.233px;">this</div><div style="left:1089px;top:110px;width:122px;height:35px;overflow:hidden;"><div class="t" style="left:15.50px;top:17.37px;font-size:14.8px;color:#3c3c3c;letter-spacing:-0.067px;">MergeTile  (id=51)</div></div><div style="left:1089px;top:110px;width:16px;height:35px;background:#f5f5f5;"></div><div style="left:611px;top:185px;width:603px;height:4px;background:#efeeed;"></div><div style="left:1px;top:224px;width:908px;height:195px;background:#ffffff;border:1px solid #a9a9a9;border-radius:6px;box-sizing:border-box;overflow:hidden;"></div><div style="left:2px;top:225px;width:906px;height:25px;background:#dadada;border-radius:5px 5px 0 0;"></div><div style="left:2px;top:249px;width:906px;height:1px;background:#c4c4c4;"></div><div style="left:2px;top:225px;width:906px;height:24px;background:#ebebeb;border-radius:5px 5px 0 0;"></div><div style="left:2px;top:249px;width:906px;height:1px;background:#b0b0b0;"></div><div style="left:2px;top:225px;width:110px;height:25px;background:#fefefe;border-right:1px solid #b0b0b0;border-radius:5px 6px 0 0;box-sizing:border-box;"></div><svg style="left:8.5px;top:231px" width="13" height="15" viewBox="0 0 13 15"><path d="M0.6 0.6H8.5L12.2 4.3V14.2H0.6Z" fill="#eef2fa" stroke="#b89858" stroke-width="1.1"/><path d="M8.5 0.6V4.3H12.2" fill="#f4e8c0" stroke="#c8a868" stroke-width="0.7"/><path d="M7.5 4V10Q7.5 12 5.5 12Q3.5 12 3.2 10.5" fill="none" stroke="#2a5aa8" stroke-width="1.6"/></svg><div class="t" style="left:25.5px;top:229.17px;font-size:14.8px;color:#111;font-family:'Liberation Sans', sans-serif;letter-spacing:-0.487px;">Lab2.java</div><svg style="left:94px;top:233px" width="11" height="11" viewBox="0 0 11 11"><path d="M2.2 2.2L8.8 8.8M8.8 2.2L2.2 8.8" stroke="#000" stroke-width="3.9" stroke-linecap="square"/><path d="M2.2 2.2L8.8 8.8M8.8 2.2L2.2 8.8" stroke="#fff" stroke-width="1.7" stroke-linecap="square"/></svg><svg style="left:864px;top:232px" width="11" height="5" viewBox="0 0 11 5"><rect x="0.75" y="0.75" width="9.5" height="3.5" fill="#fff" stroke="#2a0808" stroke-width="1.5"/></svg><svg style="left:885px;top:232px" width="11" height="11" viewBox="0 0 11 11"><rect x="0.75" y="0.75" width="9.5" height="9.5" fill="#fff" stroke="#2a0808" stroke-width="1.5"/><rect x="1.5" y="1.5" width="8" height="2" fill="#808080"/></svg><div style="left:4px;top:252px;width:12px;height:159px;background:#f0f0f0;"></div><div style="left:16px;top:250px;width:34px;height:161px;background:#fcfcfc;"></div><div style="left:50px;top:250px;width:1px;height:161px;background:#f2f2f2;"></div><div style="left:893px;top:250px;width:15px;height:168px;background:#f8f8f8;"></div><svg style="left:894.5px;top:268.5px" width="10" height="7" viewBox="0 0 10 7"><rect x="0.5" y="0.5" width="8.5" height="5.5" fill="#e6f2da" stroke="#b8d8a0"/></svg><svg style="left:4px;top:332px" width="12" height="48"><defs><pattern id="chk" width="2" height="2" patternUnits="userSpaceOnUse"><rect width="2" height="2" fill="#fbd0bc"/><rect width="1" height="1" fill="#f07a4a"/><rect x="1" y="1" width="1" height="1" fill="#f07a4a"/></pattern></defs><rect width="12" height="48" fill="url(#chk)"/><rect y="0" width="12" height="1" fill="#f08050"/><rect y="47" width="12" height="1" fill="#f08050"/></svg><svg style="left:5px;top:336px" width="11" height="8" viewBox="0 0 11 8"><path d="M5.5 1L10 6.5H1Z" fill="#fff" stroke="#6040d0" stroke-width="1.2"/></svg><svg style="left:4px;top:348px" width="13" height="13" viewBox="0 0 13 13"><path d="M1 2H5L9 6.5L5 11H1L5 6.5Z" fill="#5090d0" stroke="#2a60a0" stroke-width="0.8"/><path d="M7 3Q11 6.5 7 10" fill="none" stroke="#2a60a0" stroke-width="1.6"/></svg><div style="left:51px;top:348px;width:842px;height:16px;background:#e8f2fe;"></div><div style="left:52px;top:348px;width:615px;height:16px;background:#c6dbae;"></div><div style="left:667px;top:349px;width:2px;height:15px;background:#000;"></div><div style="left:124px;top:332px;width:24px;height:16px;background:#d4d4d4;"></div><svg style="left:39.5px;top:270.5px" width="10" height="10" viewBox="0 0 10 10"><circle cx="5" cy="5" r="4.3" fill="#d8e4f0" stroke="#b0c4d8" stroke-width="0.8"/><rect x="2.5" y="4.4" width="5" height="1.2" fill="#8aa0b8"/></svg><svg style="left:39.5px;top:334.5px" width="10" height="10" viewBox="0 0 10 10"><circle cx="5" cy="5" r="4.3" fill="#d8e4f0" stroke="#b0c4d8" stroke-width="0.8"/><rect x="2.5" y="4.4" width="5" height="1.2" fill="#8aa0b8"/></svg><div style="left:2px;top:250px;width:891px;height:167px;overflow:hidden;"><div class="m" style="left:50px;top:3.94px;color:#000;">  IGamePiece <span class="fd">piece1</span>, <span class="fd">piece2</span>;</div><div class="m" style="left:50px;top:19.94px;color:#000;">  MergeTile(IGamePiece <span class="pm">piece1</span>, IGamePiece <span class="pm">piece2</span>) {</div><div class="m" style="left:50px;top:35.94px;color:#000;">    <span class="kw">this</span>.<span class="fd">piece1</span> = <span class="pm">piece1</span>;</div><div class="m" style="left:50px;top:51.94px;color:#000;">    <span class="kw">this</span>.<span class="fd">piece2</span> = <span class="pm">piece2</span>;</div><div class="m" style="left:50px;top:67.94px;color:#000;">  }</div><div class="m" style="left:50px;top:83.94px;color:#000;">  <span class="kw">public</span> <span class="kw">int</span> getValue() {</div><div class="m" style="left:50px;top:99.94px;color:#000;">    <span class="kw">return</span> <span class="kw">this</span>.<span class="fd">piece1</span>.getValue() + <span class="kw">this</span>.<span class="fd">piece2</span>.getValue() + <span class="kw">this</span>.getValue();</div><div class="m" style="left:50px;top:115.94px;color:#000;">  }</div><div class="m" style="left:50px;top:131.94px;color:#000;">}</div><div class="m" style="left:50px;top:147.94px;color:#000;"></div><div class="m" style="left:50px;top:163.94px;color:#000;"><span class="kw">class</span> ExamplesGamePiece {</div></div><div style="left:2px;top:250px;width:48px;height:161px;overflow:hidden;"><div class="m" style="left:0px;width:38.5px;text-align:right;top:3.94px;color:#787878;">12</div><div class="m" style="left:0px;width:38.5px;text-align:right;top:19.94px;color:#787878;">13</div><div class="m" style="left:0px;width:38.5px;text-align:right;top:35.94px;color:#787878;">14</div><div class="m" style="left:0px;width:38.5px;text-align:right;top:51.94px;color:#787878;">15</div><div class="m" style="left:0px;width:38.5px;text-align:right;top:67.94px;color:#787878;">16</div><div class="m" style="left:0px;width:38.5px;text-align:right;top:83.94px;color:#787878;">17</div><div class="m" style="left:0px;width:38.5px;text-align:right;top:99.94px;color:#787878;">18</div><div class="m" style="left:0px;width:38.5px;text-align:right;top:115.94px;color:#787878;">19</div><div class="m" style="left:0px;width:38.5px;text-align:right;top:131.94px;color:#787878;">20</div><div class="m" style="left:0px;width:38.5px;text-align:right;top:147.94px;color:#787878;">21</div><div class="m" style="left:0px;width:38.5px;text-align:right;top:163.94px;color:#787878;">22</div></div><div style="left:913px;top:224px;width:302px;height:195px;background:#f7f7f7;border:1px solid #a9a9a9;border-radius:6px;box-sizing:border-box;overflow:hidden;"></div><div style="left:914px;top:225px;width:300px;height:25px;background:#dadada;border-radius:5px 5px 0 0;"></div><div style="left:914px;top:249px;width:300px;height:1px;background:#c4c4c4;"></div><div style="left:914px;top:225px;width:98px;height:25px;background:#e6e6e6;border-right:1px solid #b0b0b0;border-radius:5px 6px 0 0;box-sizing:border-box;"></div><svg style="left:918px;top:230px" width="16" height="16" viewBox="0 0 16 16"><rect x="0.5" y="0.5" width="5" height="5" fill="#d8e8f8" stroke="#3a70c0"/><rect x="0.5" y="9.5" width="5" height="5" fill="#d8e8f8" stroke="#3a70c0"/><rect x="7" y="2" width="7" height="1.5" fill="#3a70c0"/><rect x="8" y="7" width="2" height="2" fill="#3a70c0"/><rect x="7" y="11" width="7" height="1.5" fill="#3a70c0"/></svg><div class="t" style="left:938.3px;top:229.37px;font-size:14.8px;color:#111;font-family:'Liberation Sans', sans-serif;letter-spacing:0.517px;">Outline</div><svg style="left:993px;top:233px" width="11" height="11" viewBox="0 0 11 11"><path d="M2.2 2.2L8.8 8.8M8.8 2.2L2.2 8.8" stroke="#000" stroke-width="3.9" stroke-linecap="square"/><path d="M2.2 2.2L8.8 8.8M8.8 2.2L2.2 8.8" stroke="#fff" stroke-width="1.7" stroke-linecap="square"/></svg><svg style="left:1170.5px;top:232px" width="11" height="5" viewBox="0 0 11 5"><rect x="0.75" y="0.75" width="9.5" height="3.5" fill="#fff" stroke="#2a0808" stroke-width="1.5"/></svg><svg style="left:1192px;top:232px" width="11" height="11" viewBox="0 0 11 11"><rect x="0.75" y="0.75" width="9.5" height="9.5" fill="#fff" stroke="#2a0808" stroke-width="1.5"/><rect x="1.5" y="1.5" width="8" height="2" fill="#808080"/></svg><div style="left:914px;top:250px;width:300px;height:23px;background:#e2e2e2;"></div><svg style="left:1033px;top:255px" width="15" height="16" viewBox="0 0 15 16"><rect x="3.5" y="0.5" width="11" height="11" rx="1" fill="#e0e8f4" stroke="#90a8c8"/><rect x="0.5" y="3.5" width="11" height="12" rx="1" fill="#e8eef8" stroke="#90a8c8"/><rect x="3" y="9" width="6" height="1.8" fill="#3a70c0"/></svg><svg style="left:1054px;top:255px" width="16" height="16" viewBox="0 0 16 16"><path d="M2.5 2V14" stroke="#3a5a90" stroke-width="1.2"/><path d="M0.5 11L2.5 14.5L4.5 11Z" fill="#3a5a90"/><text x="5.5" y="8" font-size="9.5" font-family="Liberation Sans" font-weight="bold" fill="#2a8a60">a</text><text x="7.5" y="16" font-size="9.5" font-family="Liberation Sans" font-weight="bold" fill="#a03aa0">z</text></svg><svg style="left:1075px;top:255px" width="16" height="16" viewBox="0 0 16 16"><circle cx="8" cy="8" r="5" fill="#5aa0e0" stroke="#2a60a0"/><path d="M1 1L15 15" stroke="#1a3a80" stroke-width="1.8"/></svg><svg style="left:1096px;top:255px" width="16" height="16" viewBox="0 0 16 16"><circle cx="7" cy="9" r="4" fill="#909090"/><path d="M1 3L13 15" stroke="#1a3a80" stroke-width="1.8"/><text x="10" y="6" font-size="6" font-family="Liberation Sans" font-weight="bold" fill="#3a6ab0">S</text></svg><svg style="left:1117px;top:255px" width="16" height="16" viewBox="0 0 16 16"><circle cx="8" cy="9" r="3.5" fill="#50a050" stroke="#307030"/></svg><svg style="left:1138px;top:255px" width="16" height="16" viewBox="0 0 16 16"><circle cx="7" cy="9" r="4" fill="#909090"/><path d="M1 3L13 15" stroke="#1a3a80" stroke-width="1.8"/><text x="10" y="6" font-size="6" font-family="Liberation Sans" font-weight="bold" fill="#3a6ab0">L</text></svg><div style="left:1161px;top:252px;width:1px;height:20px;background:#d6d6d6;"></div><svg style="left:1165px;top:255px" width="14" height="14" viewBox="0 0 14 14"><circle cx="4" cy="5" r="3" fill="#d8d8e0"/><circle cx="10" cy="7" r="3" fill="#d8d8e0"/><circle cx="6" cy="10" r="3" fill="#b8b0d8"/></svg><svg style="left:1194.5px;top:258.5px" width="11" height="7" viewBox="0 0 11 7"><path d="M1 0.8H10L5.5 5.6Z" fill="#fff" stroke="#111" stroke-width="1.5" stroke-linejoin="round"/></svg><div style="left:914px;top:273px;width:300px;height:145px;overflow:hidden;"><svg style="left:3px;top:8.300000000000011px" width="6" height="4"><path d="M0.5 0.5H5.5L3 3.5Z" fill="#333"/></svg><svg style="left:8px;top:1.3000000000000114px" width="16" height="16"><circle cx="6.5" cy="6.5" r="5.8" fill="#6a50a8" stroke="#204020" stroke-width="0.6"/><text x="3.3" y="10" font-size="8" font-family="Liberation Sans" font-weight="bold" fill="#fff">I</text><path d="M10.5 9L15 15.5H6Z" fill="#3a70c0"/></svg><div class="t" style="left:29.20px;top:0.17px;font-size:14.8px;color:#3c3c3c;letter-spacing:-0.400px;">IGamePiece</div><svg style="left:16px;top:23px" width="10" height="10"><circle cx="4.5" cy="5" r="4" fill="#48a048" stroke="#2a702a" stroke-width="0.7"/></svg><div class="t" style="left:35.40px;top:17.87px;font-size:14.8px;color:#3c3c3c;letter-spacing:0.133px;">getValue()<span style="color:#957d47"> : int</span></div><svg style="left:3px;top:44px" width="6" height="4"><path d="M0.5 0.5H5.5L3 3.5Z" fill="#333"/></svg><svg style="left:8px;top:37px" width="16" height="16"><circle cx="6.5" cy="6.5" r="5.8" fill="#48a048" stroke="#204020" stroke-width="0.6"/><text x="3.3" y="10" font-size="8" font-family="Liberation Sans" font-weight="bold" fill="#fff">C</text><path d="M10.5 9L15 15.5H6Z" fill="#3a70c0"/></svg><div class="t" style="left:30.10px;top:35.87px;font-size:14.8px;color:#3c3c3c;letter-spacing:-0.243px;">BaseTile</div><svg style="left:17px;top:60px" width="9" height="7"><path d="M4 1L7.5 6H0.5Z" fill="none" stroke="#2a66b0" stroke-width="1.5"/></svg><div class="t" style="left:36.00px;top:53.87px;font-size:14.8px;color:#3c3c3c;letter-spacing:-0.080px;">value<span style="color:#957d47"> : int</span></div><svg style="left:16px;top:78px" width="10" height="8"><path d="M4.5 0.5L9 7H0Z" fill="#2a66b0"/></svg><div class="t" style="left:34.80px;top:71.87px;font-size:14.8px;color:#3c3c3c;letter-spacing:0.025px;">BaseTile(int)</div><svg style="left:16px;top:95px" width="10" height="10"><circle cx="4.5" cy="5" r="4" fill="#48a048" stroke="#2a702a" stroke-width="0.7"/></svg><div class="t" style="left:35.40px;top:89.87px;font-size:14.8px;color:#3c3c3c;letter-spacing:0.133px;">getValue()<span style="color:#957d47"> : int</span></div><svg style="left:3px;top:116px" width="6" height="4"><path d="M0.5 0.5H5.5L3 3.5Z" fill="#333"/></svg><svg style="left:8px;top:109px" width="16" height="16"><circle cx="6.5" cy="6.5" r="5.8" fill="#48a048" stroke="#204020" stroke-width="0.6"/><text x="3.3" y="10" font-size="8" font-family="Liberation Sans" font-weight="bold" fill="#fff">C</text><path d="M10.5 9L15 15.5H6Z" fill="#3a70c0"/></svg><div class="t" style="left:30.10px;top:107.87px;font-size:14.8px;color:#3c3c3c;letter-spacing:0.138px;">MergeTile</div><svg style="left:17px;top:132px" width="9" height="7"><path d="M4 1L7.5 6H0.5Z" fill="none" stroke="#2a66b0" stroke-width="1.5"/></svg><div class="t" style="left:35.10px;top:125.87px;font-size:14.8px;color:#3c3c3c;letter-spacing:-0.439px;">piece1<span style="color:#957d47"> : IGamePiece</span></div></div><svg style="left:942.5px;top:292px" width="7" height="8" viewBox="0 0 7 8"><text x="0" y="6.2" font-size="7.5" font-family="Liberation Sans" fill="#1a8a2a">A</text></svg><svg style="left:942px;top:344.5px" width="7" height="8" viewBox="0 0 7 8"><text x="0.3" y="6.8" font-size="8.5" font-family="Liberation Sans" font-weight="bold" fill="#1a8a2a">c</text></svg><svg style="left:941.5px;top:372.5px" width="8" height="6" viewBox="0 0 8 6"><path d="M3.5 0.6L7 5.2H0.6Z" fill="none" stroke="#7a40c0" stroke-width="1.1"/></svg><div style="left:1px;top:423px;width:1214px;height:240px;background:#e6e6e6;border:1px solid #a9a9a9;border-radius:6px;box-sizing:border-box;overflow:hidden;"></div><div style="left:2px;top:424px;width:1212px;height:25px;background:#dadada;border-radius:5px 5px 0 0;"></div><div style="left:2px;top:448px;width:1212px;height:1px;background:#c4c4c4;"></div><div style="left:2px;top:424px;width:101px;height:25px;background:#e6e6e6;border-right:1px solid #b0b0b0;border-radius:5px 6px 0 0;box-sizing:border-box;"></div><svg style="left:7.5px;top:429.5px" width="14" height="14" viewBox="0 0 14 14"><rect x="0.7" y="0.7" width="12" height="9" rx="1" fill="#dfeaf8" stroke="#3464a8" stroke-width="1.3"/><rect x="3" y="3" width="6" height="1.2" fill="#3464a8"/><rect x="3" y="5.5" width="4" height="1.2" fill="#7a9ad0"/><rect x="5.5" y="10" width="2" height="2" fill="#3464a8"/><rect x="2.5" y="11.8" width="8" height="1.6" fill="#3464a8"/></svg><div class="t" style="left:25.900000000000002px;top:427.87px;font-size:14.8px;color:#111;font-family:'Liberation Sans', sans-serif;letter-spacing:-0.267px;">Console</div><svg style="left:84px;top:432px" width="11" height="11" viewBox="0 0 11 11"><path d="M2.2 2.2L8.8 8.8M8.8 2.2L2.2 8.8" stroke="#000" stroke-width="3.9" stroke-linecap="square"/><path d="M2.2 2.2L8.8 8.8M8.8 2.2L2.2 8.8" stroke="#fff" stroke-width="1.7" stroke-linecap="square"/></svg><svg style="left:107px;top:429px" width="17" height="16" viewBox="0 0 17 16"><rect x="4.5" y="1.5" width="11" height="14" rx="1" fill="#e8eef8" stroke="#c09858"/><rect x="7" y="0" width="6" height="3" fill="#90a0b8"/><rect x="8" y="6" width="6" height="1.2" fill="#90a8d0"/><rect x="8" y="9" width="6" height="1.2" fill="#90a8d0"/><path d="M1 9L4 12L10 5" fill="none" stroke="#2a80e0" stroke-width="2"/></svg><div class="t" style="left:128.5px;top:427.87px;font-size:14.8px;color:#4a4a4a;font-family:'Liberation Sans', sans-serif;letter-spacing:-0.750px;">Tasks</div><svg style="left:908px;top:431px" width="12" height="12" viewBox="0 0 12 12"><rect x="0.5" y="0.5" width="11" height="11" rx="1.5" fill="#e02830" stroke="#c01820"/><rect x="2" y="2" width="8" height="8" fill="#ee3a40"/></svg><svg style="left:927.5px;top:429px" width="14" height="14" viewBox="0 0 14 14"><g stroke-linecap="round"><path d="M2.5 2.5L11.5 11.5M11.5 2.5L2.5 11.5" stroke="#8e8e8e" stroke-width="4.2"/><path d="M2.5 2.5L11.5 11.5M11.5 2.5L2.5 11.5" stroke="#b4b4b4" stroke-width="2.4"/></g></svg><svg style="left:947.5px;top:428px" width="17" height="17" viewBox="0 0 17 17"><g stroke-linecap="round"><path d="M6 6L14.5 14.5M14.5 6L6 14.5" stroke="#8e8e8e" stroke-width="4"/><path d="M6 6L14.5 14.5M14.5 6L6 14.5" stroke="#b8b8b8" stroke-width="2.2"/><path d="M2.5 2.5L9.5 9.5M9.5 2.5L2.5 9.5" stroke="#8e8e8e" stroke-width="3.4"/><path d="M2.5 2.5L9.5 9.5M9.5 2.5L2.5 9.5" stroke="#e8e8e8" stroke-width="1.6"/></g></svg><div style="left:969px;top:427px;width:1px;height:20px;background:#d6d6d6;"></div><svg style="left:975px;top:429px" width="15" height="16" viewBox="0 0 15 16"><path d="M0.5 0.5H8L11.5 4V15.5H0.5Z" fill="#eef2f8" stroke="#a0a8b8"/><rect x="2" y="4" width="6" height="1" fill="#8aa0c0"/><rect x="2" y="7" width="6" height="1" fill="#8aa0c0"/><path d="M8 10L14 15M14 10L8 15" stroke="#222" stroke-width="2"/></svg><svg style="left:996px;top:429px" width="16" height="16" viewBox="0 0 16 16"><rect x="7.5" y="0.5" width="8" height="15" fill="#eef2f8" stroke="#90a8c8"/><path d="M1 9V6Q1 3 4 3Q7 3 7 6V9" fill="none" stroke="#906020" stroke-width="1.5"/><rect x="0" y="8" width="8" height="7" fill="#e8b830" stroke="#a07010" stroke-width="0.7"/></svg><svg style="left:1017px;top:429px" width="16" height="16" viewBox="0 0 16 16"><path d="M0.5 0.5H8L11.5 4V15.5H0.5Z" fill="#eef2f8" stroke="#c0b080"/><path d="M14 5V11H8" fill="none" stroke="#d8a830" stroke-width="2"/><path d="M9 8L6 11L9 14Z" fill="#e8b840"/></svg><div style="left:1036px;top:427px;width:21px;height:20px;background:#d0d0d0;border:1px solid #b8b8b8;border-radius:3px;box-sizing:border-box;"></div><svg style="left:1038px;top:429px" width="17" height="16" viewBox="0 0 17 16"><rect x="4.5" y="0.5" width="12" height="9" fill="#e8f0fa" stroke="#3a6ab0"/><rect x="7" y="3" width="7" height="1" fill="#3a6ab0"/><rect x="0.5" y="6.5" width="9" height="7" fill="#e8f0fa" stroke="#3a6ab0"/><rect x="3" y="14" width="4" height="2" fill="#3a6ab0"/></svg><div style="left:1057px;top:427px;width:21px;height:20px;background:#d0d0d0;border:1px solid #b8b8b8;border-radius:3px;box-sizing:border-box;"></div><svg style="left:1059px;top:429px" width="17" height="16" viewBox="0 0 17 16"><rect x="4.5" y="0.5" width="12" height="9" fill="#e8f0fa" stroke="#3a6ab0"/><path d="M8 2L12 7M12 2L8 7" stroke="#e02020" stroke-width="1.4"/><rect x="0.5" y="6.5" width="9" height="7" fill="#e8f0fa" stroke="#3a6ab0"/><rect x="3" y="14" width="4" height="2" fill="#3a6ab0"/></svg><div style="left:1081px;top:427px;width:1px;height:20px;background:#d6d6d6;"></div><svg style="left:1086px;top:429px" width="16" height="16" viewBox="0 0 16 16"><rect x="0.5" y="4.5" width="14" height="11" fill="#f0f4fa" stroke="#90a8c8"/><rect x="1" y="5" width="13" height="3" fill="#3a70c0"/><path d="M9 9L14 2" stroke="#208020" stroke-width="2"/><circle cx="13" cy="3" r="2.5" fill="#30a030"/></svg><svg style="left:1107px;top:429px" width="16" height="16" viewBox="0 0 16 16"><rect x="0.5" y="1.5" width="14" height="10" fill="#d8e4f4" stroke="#8aa8d0"/><rect x="3" y="4" width="7" height="1" fill="#8aa8d0"/><rect x="5" y="12" width="6" height="2" fill="#8aa8d0"/></svg><svg style="left:1127px;top:434px" width="6" height="4" viewBox="0 0 6 4"><path d="M0.2 0.2H5.2L2.7 2.8Z" fill="#777"/></svg><svg style="left:1135px;top:429px" width="16" height="16" viewBox="0 0 16 16"><rect x="0.5" y="3.5" width="12" height="12" fill="#fdf8e0" stroke="#b09850"/><rect x="1" y="4" width="11" height="2" fill="#5b8fd0"/><path d="M12 0L15 3L12 6L9 3Z" fill="#f8e080" stroke="#c8a040"/></svg><svg style="left:1155px;top:434px" width="6" height="4" viewBox="0 0 6 4"><path d="M0.2 0.2H5.2L2.7 2.8Z" fill="#333"/></svg><svg style="left:1170px;top:431px" width="11" height="5" viewBox="0 0 11 5"><rect x="0.75" y="0.75" width="9.5" height="3.5" fill="#fff" stroke="#2a0808" stroke-width="1.5"/></svg><svg style="left:1191px;top:431px" width="11" height="11" viewBox="0 0 11 11"><rect x="0.75" y="0.75" width="9.5" height="9.5" fill="#fff" stroke="#2a0808" stroke-width="1.5"/><rect x="1.5" y="1.5" width="8" height="2" fill="#808080"/></svg><div class="t" style="left:4.0px;top:450.17px;font-size:14.8px;color:#4a4a4a;font-family:'Liberation Sans', sans-serif;letter-spacing:-0.046px;">Lab2 [Java Application] /usr/lib/jvm/java-9-oracle/bin/java (Apr 16, 2018, 6:14:39 PM)</div><div style="left:4px;top:468px;width:1204px;height:188px;background:#ffffff;"></div><div style="left:4px;top:656px;width:1210px;height:6px;background:#ebe6e2;"></div><div class="m" style="left:6px;top:469.94px;color:#000;">Tests defined in the class: ExamplesGamePiece:</div><div class="m" style="left:6px;top:485.94px;color:#000;">---------------------------</div><div class="m" style="left:6px;top:501.94px;color:#000;">ExamplesGamePiece:</div><div class="m" style="left:6px;top:517.94px;color:#000;">---------------</div><div class="m" style="left:6px;top:533.94px;color:#000;">new ExamplesGamePiece:1(</div><div class="m" style="left:6px;top:549.94px;color:#000;"> this.four = new MergeTile:2(</div><div class="m" style="left:6px;top:565.94px;color:#000;">  this.piece1 = new BaseTile:3(</div><div class="m" style="left:6px;top:581.94px;color:#000;">   this.value = 2)</div><div class="m" style="left:6px;top:597.94px;color:#000;">  this.piece2 = new BaseTile:4(</div><div class="m" style="left:6px;top:613.94px;color:#000;">   this.value = 2)))</div><div class="m" style="left:6px;top:629.94px;color:#000;">---------------</div><svg style="left:594.5px;top:558px" width="14" height="22" viewBox="0 0 14 22"><path d="M1 1V17L5 13L8 20L10.5 19L7.5 12H13Z" fill="#fff" stroke="#000" stroke-width="1.2" stroke-linejoin="round"/></svg><div style="left:0px;top:663px;width:1216px;height:26px;background:#e1e1e1;"></div><div style="left:497px;top:665px;width:1px;height:23px;background:#d6d6d6;"></div><div style="left:498px;top:665px;width:1px;height:23px;background:#ececec;"></div><div style="left:617px;top:665px;width:1px;height:23px;background:#d6d6d6;"></div><div style="left:618px;top:665px;width:1px;height:23px;background:#ececec;"></div><div style="left:727px;top:665px;width:1px;height:23px;background:#d6d6d6;"></div><div style="left:728px;top:665px;width:1px;height:23px;background:#ececec;"></div><div class="t" style="left:504.6px;top:665.57px;font-size:14.8px;color:#3c3c3c;font-family:'Liberation Sans', sans-serif;letter-spacing:0.243px;">Writable</div><div class="t" style="left:621.9px;top:665.57px;font-size:14.8px;color:#3c3c3c;font-family:'Liberation Sans', sans-serif;letter-spacing:0.009px;">Smart Insert</div><div class="t" style="left:733.1999999999999px;top:665.57px;font-size:14.8px;color:#3c3c3c;font-family:'Liberation Sans', sans-serif;letter-spacing:-0.400px;">18 : 78</div><div style="left:837px;top:664px;width:35px;height:21px;background:#e1e1e1;border-left:1px solid #f4f4f4;border-top:1px solid #f4f4f4;border-right:1px solid #a8a8a8;border-bottom:1px solid #a8a8a8;box-sizing:border-box;"></div><svg style="left:840px;top:667px" width="18" height="18" viewBox="0 0 18 18"><rect x="6.5" y="6.5" width="10" height="8" fill="#e8f0fa" stroke="#5a80b0"/><circle cx="5" cy="6" r="4" fill="#f0c850" stroke="#a88020" stroke-width="0.8"/><circle cx="7" cy="12" r="3" fill="#fff" stroke="#888"/></svg><svg style="left:874px;top:669px" width="2" height="16" viewBox="0 0 2 16"><rect x="0" y="0.0" width="2" height="2" fill="#a8a290"/><rect x="0" y="4.2" width="2" height="2" fill="#a8a290"/><rect x="0" y="8.4" width="2" height="2" fill="#a8a290"/><rect x="0" y="12.6" width="2" height="2" fill="#a8a290"/></svg><svg style="left:1197px;top:669px" width="15" height="15" viewBox="0 0 15 15"><rect x="0.5" y="0.5" width="14" height="14" rx="2.5" fill="#8a8a8a" stroke="#6a6a6a"/><circle cx="4" cy="11" r="1.5" fill="#fff"/><path d="M3 7Q7.5 7 8 12M3 4Q11 4 11 12" fill="none" stroke="#fff" stroke-width="1.4"/></svg></body></html>
